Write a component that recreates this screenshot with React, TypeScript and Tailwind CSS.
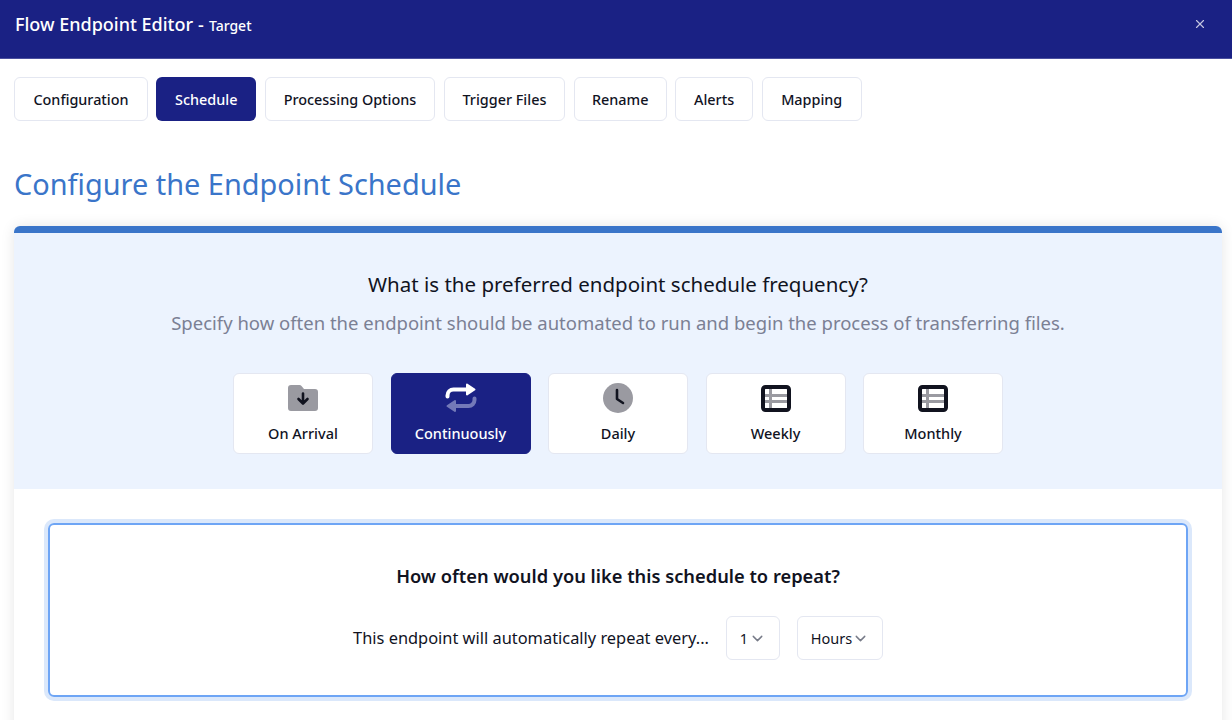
import { X, ChevronDown } from 'lucide-react'

const tabs = [
  { label: 'Configuration', width: 'w-[134px]' },
  { label: 'Schedule', width: 'w-[99.800px]', active: true },
  { label: 'Processing Options', width: 'w-[170.800px]' },
  { label: 'Trigger Files', width: 'w-[121.400px]' },
  { label: 'Rename', width: 'w-[93.200px]' },
  { label: 'Alerts', width: 'w-[78px]' },
  { label: 'Mapping', width: 'w-[100.400px]' },
]

function FolderIcon() {
  return (
    <svg width="30" height="28" viewBox="0 0 30 28">
      <path d="M0 4a3 3 0 0 1 3-3h8.500a2.500 2.500 0 0 1 2 1l2.500 3h11a3 3 0 0 1 3 3v16a3 3 0 0 1-3 3H3a3 3 0 0 1-3-3z" fill="#9a9aa1" />
      <path d="M15 9.500v9.500M10.500 15l4.500 4.500 4.500-4.500" fill="none" stroke="#11131f" strokeWidth="2.600" strokeLinecap="round" strokeLinejoin="round" />
    </svg>
  )
}

function RepeatIcon() {
  return (
    <svg width="32" height="30" viewBox="0 0 32 30">
      <path d="M2.500 13.500v-1a6 6 0 0 1 6-6h15" fill="none" stroke="#ffffff" strokeWidth="4" strokeLinecap="round" />
      <path d="M22 1.500l7.500 5-7.500 5z" fill="#ffffff" stroke="#ffffff" strokeWidth="2" strokeLinejoin="round" />
      <path d="M29.500 15.500v1.500a6 6 0 0 1-6 6h-15" fill="none" stroke="#7379b8" strokeWidth="4" strokeLinecap="round" />
      <path d="M10 18l-7.500 5 7.500 5z" fill="#7379b8" stroke="#7379b8" strokeWidth="2" strokeLinejoin="round" />
    </svg>
  )
}

function ClockIcon() {
  return (
    <svg width="30" height="30" viewBox="0 0 30 30">
      <circle cx="15" cy="15" r="15" fill="#9a9aa1" />
      <path d="M14 7v9l6 4" fill="none" stroke="#11131f" strokeWidth="2.600" strokeLinecap="round" strokeLinejoin="round" />
    </svg>
  )
}

function TableIcon() {
  return (
    <svg width="30" height="27" viewBox="0 0 30 27">
      <rect x="2" y="2" width="26" height="23" rx="2.500" fill="#ffffff" stroke="#11131f" strokeWidth="4" />
      <path d="M4 10.500h22M4 16.500h22M9.500 4v19" stroke="#9a9aa1" strokeWidth="3" />
    </svg>
  )
}

const options = [
  { label: 'On Arrival', icon: <FolderIcon /> },
  { label: 'Continuously', icon: <RepeatIcon />, active: true },
  { label: 'Daily', icon: <ClockIcon /> },
  { label: 'Weekly', icon: <TableIcon /> },
  { label: 'Monthly', icon: <TableIcon /> },
]

export default function App() {
  return (
    <div className="h-[720px] overflow-hidden bg-white font-['Noto_Sans',sans-serif] text-[#11131f]">
      <header className="flex h-[59px] items-center justify-between border-b border-[#4a4f9e] bg-[#1a2184] pb-[10px] pl-[15px] pr-[25px] text-white">
        <div className="flex items-baseline font-[550]">
          <span className="text-[18px]">Flow Endpoint Editor</span>
          <span className="ml-[5px] text-[18px]">-</span>
          <span className="ml-[5px] text-[14px]">Target</span>
        </div>
        <X size={14} className="text-[#c3c5e0]" />
      </header>

      <nav className="flex gap-[8.400px] pl-[14px] pt-[18px]">
        {tabs.map((tab) => (
          <div
            key={tab.label}
            className={`${tab.width} ${
              tab.active
                ? 'flex h-[44px] items-center justify-center rounded-md bg-[#1a2184] pt-px text-[14.400px] font-[550] text-white'
                : 'flex h-[44px] items-center justify-center rounded-md border border-[#e4e7f1] bg-white pt-px text-[14.400px] font-[550]'
            }`}
          >
            {tab.label}
          </div>
        ))}
      </nav>

      <h1 className="pl-[14px] pt-[41px] text-[28.900px] leading-[44px] text-[#3a75c9]">Configure the Endpoint Schedule</h1>

      <section className="ml-[14px] mr-[10px] mt-[20px] rounded-t-md border-t-[7px] border-[#3a75c9] shadow-[0_0_14px_rgba(0,0,0,0.1)]">
        <div className="flex h-[256px] flex-col items-center bg-[#ecf3fe] pt-[36px]">
          <div className="text-[20.500px] leading-[30px]">What is the preferred endpoint schedule frequency?</div>
          <div className="mt-[11px] text-[18.500px] leading-[26px] text-[#7b8094]">
            Specify how often the endpoint should be automated to run and begin the process of transferring files.
          </div>
          <div className="mt-[37px] flex gap-[17.500px]">
            {options.map((o) => (
              <div
                key={o.label}
                className={
                  o.active
                    ? 'flex h-[81px] w-[140px] flex-col items-center rounded-md border border-[#1a2184] bg-[#1a2184] pt-[9px] text-white'
                    : 'flex h-[81px] w-[140px] flex-col items-center rounded-md border border-[#e4e7f1] bg-white pt-[9px]'
                }
              >
                <div className="flex h-[30px] items-center">{o.icon}</div>
                <div className="mt-[10px] text-[14.500px] font-[550] leading-[20px]">{o.label}</div>
              </div>
            ))}
          </div>
        </div>

        <div className="h-[300px] bg-white px-[34px] pt-[34px]">
          <div className="flex h-[174px] flex-col items-center rounded-md border-2 border-[#6ea5f5] pt-[38px] shadow-[0_0_0_4px_#dbe8fb]">
            <div className="text-[18.300px] font-semibold leading-[26px]">How often would you like this schedule to repeat?</div>
            <div className="mt-[27px] flex items-center">
              <span className="pt-px text-[16.400px]">This endpoint will automatically repeat every...</span>
              <div className="ml-[17px] flex h-[44px] w-[54px] items-center justify-center gap-[1px] rounded-md border border-[#e4e7f1] pt-px text-[14.500px]">
                1 <ChevronDown size={17} className="text-[#777b88]" />
              </div>
              <div className="ml-[17px] flex h-[44px] w-[86px] items-center justify-center rounded-md border border-[#e4e7f1] pt-px text-[14.500px]">
                Hours <ChevronDown size={17} className="text-[#777b88]" />
              </div>
            </div>
          </div>
        </div>
      </section>
    </div>
  )
}
